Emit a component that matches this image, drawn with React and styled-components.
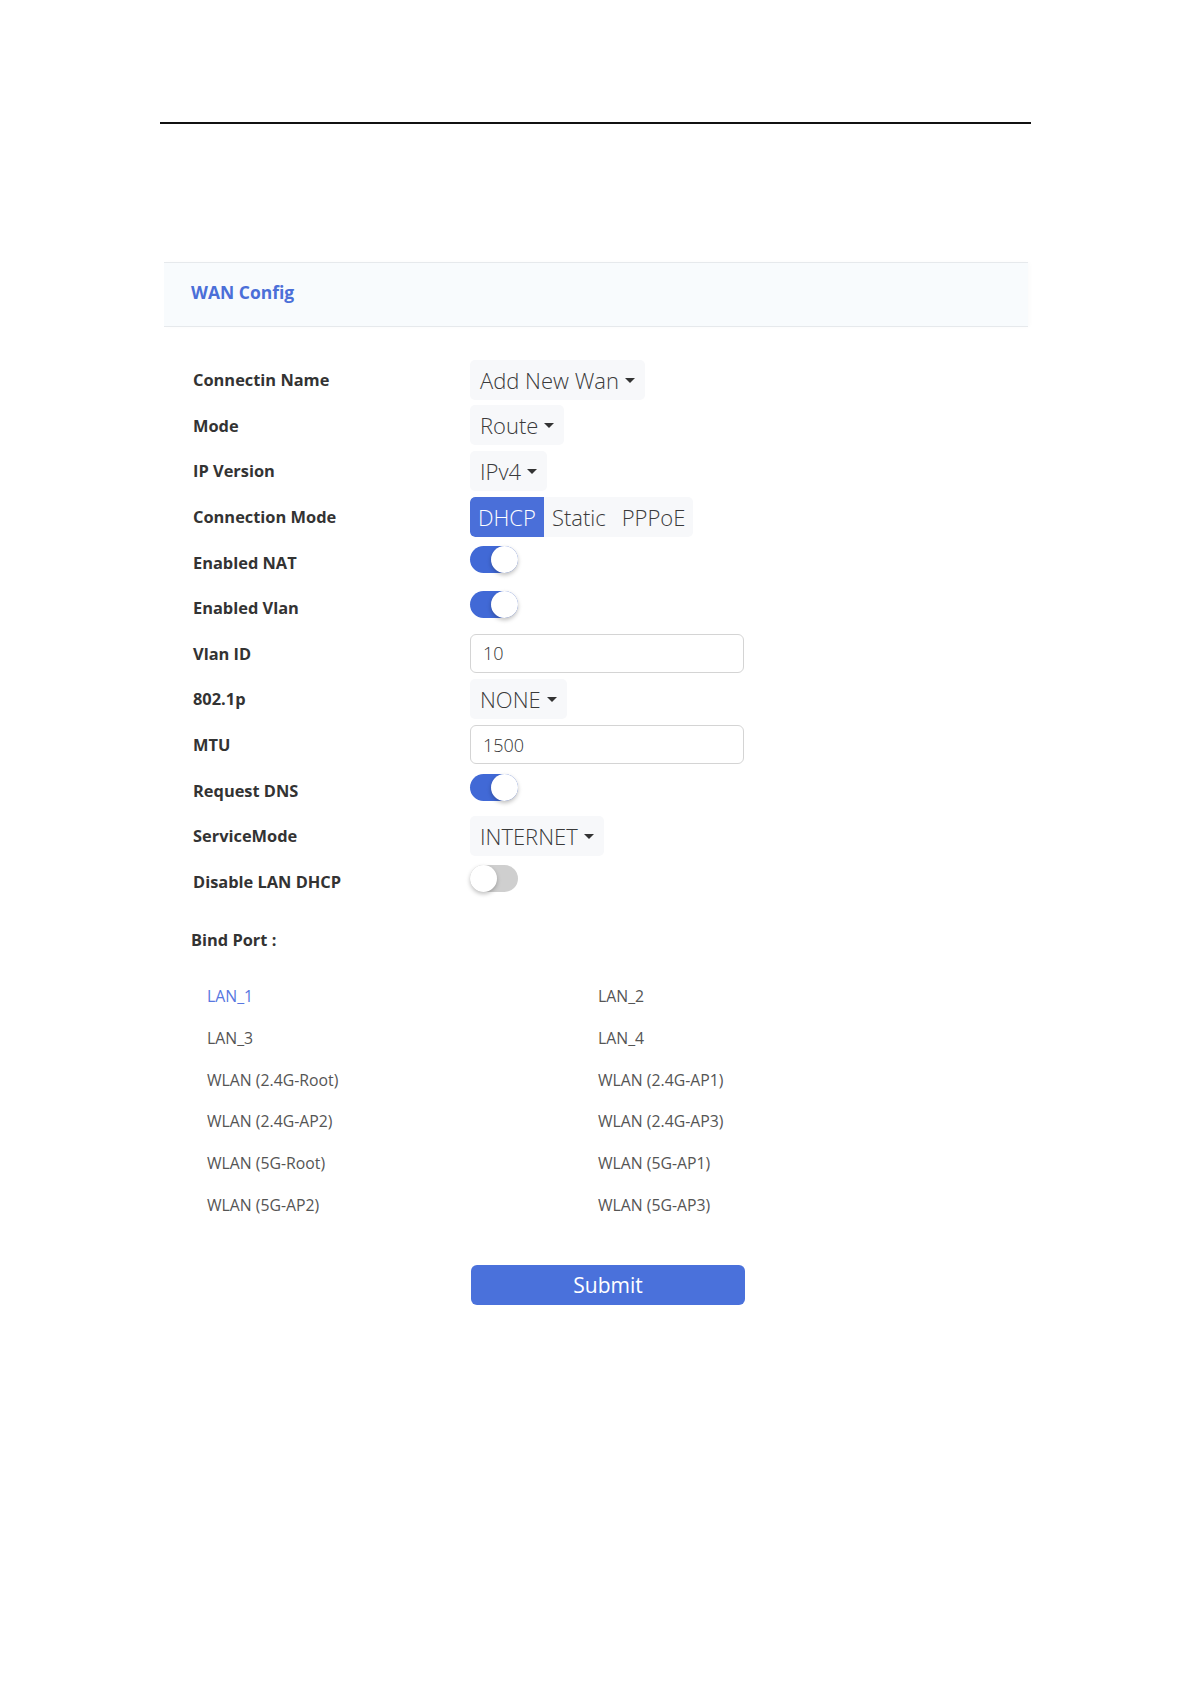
import React from 'react';
import styled, { createGlobalStyle } from 'styled-components';

const GlobalStyle = createGlobalStyle`
  html, body {
    margin: 0;
    padding: 0;
    background: #ffffff;
    font-family: "Open Sans", "Noto Sans", "Liberation Sans", sans-serif;
  }
`;

const fields = [
  { label: 'Connectin Name', type: 'select', value: 'Add New Wan' },
  { label: 'Mode', type: 'select', value: 'Route' },
  { label: 'IP Version', type: 'select', value: 'IPv4' },
  { label: 'Connection Mode', type: 'segment', options: ['DHCP', 'Static', 'PPPoE'], active: 0 },
  { label: 'Enabled NAT', type: 'toggle', on: true },
  { label: 'Enabled Vlan', type: 'toggle', on: true },
  { label: 'Vlan ID', type: 'input', value: '10' },
  { label: '802.1p', type: 'select', value: 'NONE' },
  { label: 'MTU', type: 'input', value: '1500' },
  { label: 'Request DNS', type: 'toggle', on: true },
  { label: 'ServiceMode', type: 'select', value: 'INTERNET' },
  { label: 'Disable LAN DHCP', type: 'toggle', on: false },
];

const ports = [
  'LAN_1', 'LAN_2',
  'LAN_3', 'LAN_4',
  'WLAN (2.4G-Root)', 'WLAN (2.4G-AP1)',
  'WLAN (2.4G-AP2)', 'WLAN (2.4G-AP3)',
  'WLAN (5G-Root)', 'WLAN (5G-AP1)',
  'WLAN (5G-AP2)', 'WLAN (5G-AP3)',
];

const Page = styled.div`
  width: 871px;
  margin-left: 160px;
  padding-top: 122px;
  padding-bottom: 380px;
`;

const TopRule = styled.div`
  height: 2px;
  background: #111;
`;

const Panel = styled.section`
  margin: 138px 3px 0 4px;
`;

const PanelHeader = styled.div`
  height: 65px;
  display: flex;
  align-items: center;
  padding: 0 0 6px 27px;
  box-sizing: border-box;
  background: #f8fbfd;
  border-top: 1px solid #e6e9ec;
  border-bottom: 1px solid #e6e9ec;
  box-shadow: 2px 0 4px rgba(0, 0, 0, 0.02);
`;

const Title = styled.h2`
  margin: 0;
  font-size: 17.5px;
  font-weight: 700;
  color: #4b6fd8;
`;

const Form = styled.div`
  display: flex;
  flex-direction: column;
  padding: 30px 0 0 29px;
`;

const Row = styled.div`
  display: grid;
  grid-template-columns: 277px 1fr;
  align-items: center;
  height: 45.6px;
`;

const Label = styled.div`
  font-size: 16.4px;
  font-weight: 700;
  color: #333;
`;

const Select = styled.div`
  justify-self: start;
  display: inline-flex;
  align-items: center;
  gap: 6px;
  height: 40px;
  padding: 0 10px;
  background: #f7f8fa;
  border-radius: 5px;
  font-size: 22px;
  font-weight: 300;
  color: #3a3a3a;
`;

const Caret = styled.span`
  width: 0;
  height: 0;
  border-left: 5px solid transparent;
  border-right: 5px solid transparent;
  border-top: 5px solid #333;
  margin-top: 1px;
`;

const Segments = styled.div`
  justify-self: start;
  display: inline-flex;
  height: 40px;
  background: #f7f8fa;
  border-radius: 5px;
  overflow: hidden;
`;

const Segment = styled.div`
  display: flex;
  align-items: center;
  padding: 0 8px;
  font-size: 22px;
  font-weight: 300;
  color: ${p => (p.$active ? '#fff' : '#3a3a3a')};
  background: ${p => (p.$active ? '#4a6fd9' : 'transparent')};
  border-radius: ${p => (p.$active ? '5px 0 0 5px' : '0')};
`;

const Toggle = styled.div`
  position: relative;
  width: 48px;
  height: 27px;
  margin-bottom: 6px;
  border-radius: 14px;
  background: ${p => (p.$on ? '#4169d6' : '#cfcfcf')};
`;

const Knob = styled.span`
  position: absolute;
  top: 0;
  left: ${p => (p.$on ? '21px' : '0')};
  width: 27px;
  height: 27px;
  border-radius: 50%;
  background: #fff;
  box-shadow: 0 2px 4px rgba(0, 0, 0, 0.25);
`;

const Input = styled.input`
  width: 274px;
  height: 39px;
  box-sizing: border-box;
  padding: 0 12px;
  border: 1px solid #d4d4d4;
  border-radius: 6px;
  font-family: "Open Sans", "Noto Sans", sans-serif;
  font-size: 18px;
  font-weight: 300;
  color: #333;
  outline: none;
`;

const BindTitle = styled.div`
  margin: 24px 0 0 -2px;
  font-size: 16.4px;
  font-weight: 700;
  color: #333;
`;

const PortGrid = styled.div`
  display: grid;
  grid-template-columns: 391px 1fr;
  grid-auto-rows: 41.8px;
  align-items: center;
  margin: 24px 0 0 14px;
`;

const Port = styled.div`
  font-size: 15.8px;
  color: ${p => (p.$active ? '#5877e0' : '#555')};
`;

const SubmitRow = styled.div`
  padding: 39px 0 0 278px;
`;

const SubmitButton = styled.button`
  width: 274px;
  height: 40px;
  border: none;
  border-radius: 6px;
  background: #4a71db;
  color: #fff;
  font-family: "Open Sans", "Noto Sans", sans-serif;
  font-size: 21px;
  cursor: pointer;
`;

const Control = ({ field }) => {
  if (field.type === 'select') {
    return (
      <Select>
        {field.value}
        <Caret />
      </Select>
    );
  }
  if (field.type === 'segment') {
    return (
      <Segments>
        {field.options.map((opt, i) => (
          <Segment key={opt} $active={i === field.active}>{opt}</Segment>
        ))}
      </Segments>
    );
  }
  if (field.type === 'toggle') {
    return (
      <Toggle $on={field.on}>
        <Knob $on={field.on} />
      </Toggle>
    );
  }
  return <Input defaultValue={field.value} />;
};

const App = () => {
  return (
    <Page>
      <GlobalStyle />
      <TopRule />
      <Panel>
        <PanelHeader>
          <Title>WAN Config</Title>
        </PanelHeader>
        <Form>
          {fields.map(field => (
            <Row key={field.label}>
              <Label>{field.label}</Label>
              <div>
                <Control field={field} />
              </div>
            </Row>
          ))}
          <BindTitle>Bind Port :</BindTitle>
          <PortGrid>
            {ports.map((port, i) => (
              <Port key={port} $active={i === 0}>{port}</Port>
            ))}
          </PortGrid>
          <SubmitRow>
            <SubmitButton>Submit</SubmitButton>
          </SubmitRow>
        </Form>
      </Panel>
    </Page>
  );
};

export default App;
